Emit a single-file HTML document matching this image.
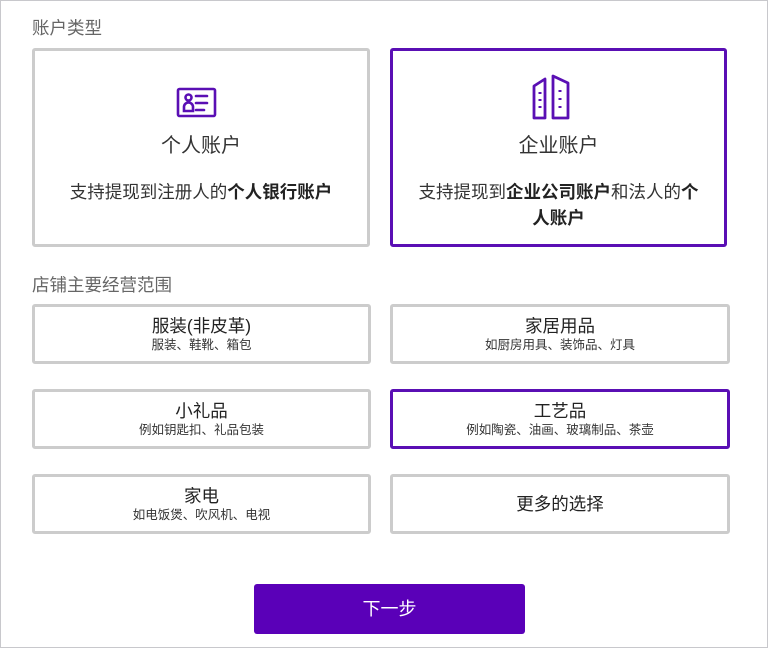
<!DOCTYPE html>
<html><head><meta charset="utf-8"><style>
*{box-sizing:border-box;margin:0;padding:0}
body{width:768px;height:648px;background:#fff;font-family:"Liberation Sans","Noto Sans CJK SC",sans-serif;color:#333;position:relative;overflow:hidden}
.frame{position:absolute;left:0;top:0;width:768px;height:648px;border:1px solid #c8c8cc}
.lbl{position:absolute;left:32px;font-size:17.5px;color:#666;line-height:20px}
.card{position:absolute;border:3px solid #ccc;border-radius:3px;background:#fff;text-align:center}
.sel{border-color:#5a0fb4}
.big .t{position:absolute;left:0;right:0;top:78px;font-size:20px;color:#333}
.big .d{position:absolute;left:22px;right:22px;top:128px;font-size:17.5px;line-height:26px;color:#333}
.big b{font-weight:bold;color:#222}
.sm{height:60px;width:340px;padding-top:8px}
.sm .t{font-size:17.5px;line-height:22px;color:#222}
.sm .s{font-size:12.5px;line-height:16px;color:#333}
.btn{position:absolute;left:254px;top:584px;width:271px;height:50px;background:#5a00b8;border-radius:3px;color:#fff;font-size:18px;text-align:center;line-height:50px}
</style></head><body>
<div class="frame"></div>
<div class="lbl" style="top:18px">账户类型</div>
<div class="card big" style="left:32px;top:48px;width:338px;height:199px">
<svg style="position:absolute;left:141px;top:36px" width="42" height="32" viewBox="0 0 42 32" fill="none" stroke="#5a0fb4" stroke-width="2.6" stroke-linecap="round"><rect x="2" y="2" width="37" height="27" rx="1.5"/><circle cx="12.5" cy="10.5" r="3"/><path d="M8 24v-4a4.5 4.5 0 0 1 9 0v4z"/><path d="M20 9h11M20 16h11M20 23h8"/></svg>
<div class="t">个人账户</div>
<div class="d">支持提现到注册人的<b>个人银行账户</b></div>
</div>
<div class="card big sel" style="left:390px;top:48px;width:337px;height:199px">
<svg style="position:absolute;left:137px;top:22px" width="44" height="48" viewBox="0 0 44 48" fill="none" stroke="#5a0fb4" stroke-width="2.8" stroke-linejoin="round"><path d="M15 45H4V13l11-7z"/><path d="M23 45V3l15 7v35z"/><path d="M10 19v2M10 26v2M10 33v2M30 17v2M30 25v2M30 33v2" stroke-width="3"/></svg>
<div class="t">企业账户</div>
<div class="d">支持提现到<b>企业公司账户</b>和法人的<b>个人账户</b></div>
</div>
<div class="lbl" style="top:275px">店铺主要经营范围</div>
<div class="card sm" style="left:32px;top:304px;width:339px"><div class="t">服装(非皮革)</div><div class="s">服装、鞋靴、箱包</div></div>
<div class="card sm" style="left:390px;top:304px"><div class="t">家居用品</div><div class="s">如厨房用具、装饰品、灯具</div></div>
<div class="card sm" style="left:32px;top:389px;width:339px"><div class="t">小礼品</div><div class="s">例如钥匙扣、礼品包装</div></div>
<div class="card sm sel" style="left:390px;top:389px"><div class="t">工艺品</div><div class="s">例如陶瓷、油画、玻璃制品、茶壶</div></div>
<div class="card sm" style="left:32px;top:474px;width:339px"><div class="t">家电</div><div class="s">如电饭煲、吹风机、电视</div></div>
<div class="card sm" style="left:390px;top:474px;padding-top:16px"><div class="t">更多的选择</div></div>
<div class="btn">下一步</div>
</body></html>
